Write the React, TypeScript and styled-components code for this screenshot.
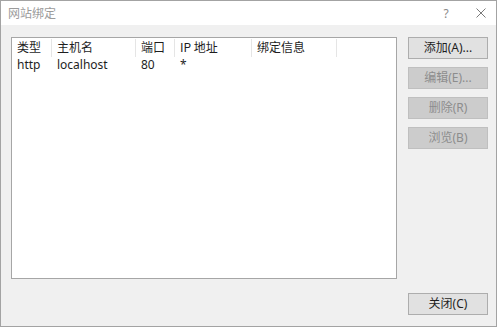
import styled, { createGlobalStyle } from "styled-components";

const GlobalStyle = createGlobalStyle`
    html, body {
        margin: 0;
        padding: 0;
        background: #ffffff;
    }
    * {
        box-sizing: border-box;
    }
`

const uiFont = `"Noto Sans", "Noto Sans CJK SC", sans-serif`

const Window = styled.div`
    display: flex;
    flex-direction: column;
    width: 497px;
    height: 327px;
    border: 1px solid #a3a3a3;
    background: #f0f0f0;
    font-family: ${uiFont};
    font-size: 12px;
    color: #1e1e1e;
`

const TitleBar = styled.div`
    display: flex;
    align-items: center;
    justify-content: space-between;
    height: 24px;
    padding-left: 7px;
    background: #ffffff;
`

const Title = styled.span`
    color: #9b9b9b;
    font-family: "Noto Sans CJK SC", sans-serif;
    font-size: 12px;
    line-height: 22px;
`

const TitleControls = styled.div`
    display: flex;
    align-items: center;
    height: 100%;
`

const TitleButton = styled.div<{ $w: number }>`
    display: flex;
    align-items: center;
    justify-content: center;
    width: ${({ $w }) => $w}px;
    height: 100%;
    color: #8a8a8a;
    font-size: 12px;
`

const Body = styled.div`
    display: flex;
    flex: 1;
    gap: 11px;
    padding: 12px 7px 11px 10px;
`

const ListBox = styled.div`
    width: 386px;
    height: 242px;
    border: 1px solid #a6a6a6;
    background: #ffffff;
    padding-top: 1px;
`

const GridRow = styled.div`
    display: grid;
    grid-template-columns: 40px 84px 39px 77px 85px;
`

const HeaderCell = styled.div`
    height: 18px;
    padding-left: 5px;
    border-right: 1px solid #e5e5e5;
    line-height: 16px;
    font-family: "Noto Sans CJK SC", sans-serif;
    white-space: nowrap;
`

const Cell = styled.div`
    height: 17px;
    padding-left: 5px;
    line-height: 16px;
    white-space: nowrap;
`

const ButtonColumn = styled.div`
    display: flex;
    flex-direction: column;
    gap: 8px;
    width: 80px;
`

const Button = styled.div<{ $disabled?: boolean }>`
    display: flex;
    align-items: center;
    justify-content: center;
    height: 22px;
    border: 1px solid ${({ $disabled }) => ($disabled ? "#bfbfbf" : "#adadad")};
    background: ${({ $disabled }) => ($disabled ? "#cccccc" : "#e1e1e1")};
    color: ${({ $disabled }) => ($disabled ? "#8d8d8d" : "#1e1e1e")};
    font-size: 12px;
    line-height: 20px;
    white-space: nowrap;
`

const CloseButton = styled(Button)`
    margin-top: auto;
`

const columns = ["类型", "主机名", "端口", "IP 地址", "绑定信息"]

const bindings = [
    { type: "http", host: "localhost", port: "80", ip: "*", info: "" },
]

const App = () => {
    return (
        <>
            <GlobalStyle />
            <Window>
                <TitleBar>
                    <Title>网站绑定</Title>
                    <TitleControls>
                        <TitleButton $w={40}>?</TitleButton>
                        <TitleButton $w={30}>
                            <svg width="10" height="10" viewBox="0 0 10 10">
                                <path d="M0.5 0.5 L9.5 9.5 M9.5 0.5 L0.5 9.5" stroke="#7a7a7a" strokeWidth="1" fill="none" />
                            </svg>
                        </TitleButton>
                    </TitleControls>
                </TitleBar>
                <Body>
                    <ListBox>
                        <GridRow>
                            {columns.map((c) => (
                                <HeaderCell key={c}>{c}</HeaderCell>
                            ))}
                        </GridRow>
                        {bindings.map((b) => (
                            <GridRow key={b.host + b.port}>
                                <Cell>{b.type}</Cell>
                                <Cell>{b.host}</Cell>
                                <Cell>{b.port}</Cell>
                                <Cell>{b.ip}</Cell>
                                <Cell>{b.info}</Cell>
                            </GridRow>
                        ))}
                    </ListBox>
                    <ButtonColumn>
                        <Button>添加(A)...</Button>
                        <Button $disabled>编辑(E)...</Button>
                        <Button $disabled>删除(R)</Button>
                        <Button $disabled>浏览(B)</Button>
                        <CloseButton>关闭(C)</CloseButton>
                    </ButtonColumn>
                </Body>
            </Window>
        </>
    )
}

export default App;
